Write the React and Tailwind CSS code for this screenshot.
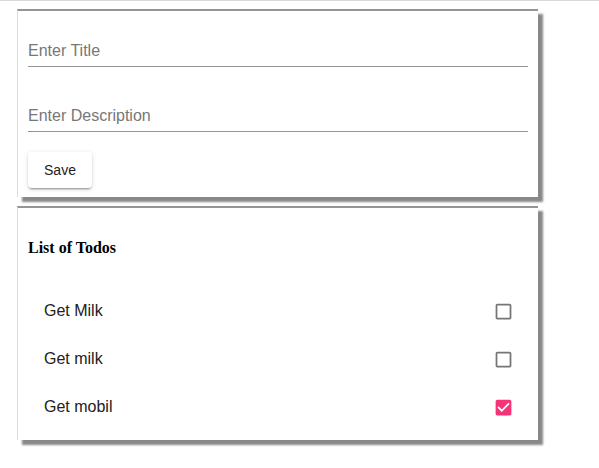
export default function App() {
  const todos = [
    { title: "Get Milk", done: false },
    { title: "Get milk", done: false },
    { title: "Get mobil", done: true },
  ];

  return (
    <div className="min-h-[468px] bg-white border-t border-[#d9d9d9] font-['Liberation_Sans',Arial,sans-serif]">
      <div className="ml-[17px] w-[521px] pt-[8px]">
        <div className="bg-white border-l border-[#dcdcdc] border-t-2 border-t-[#959595] shadow-[5px_5px_2px_#888] px-[10px] pt-[24px] pb-[9px]">
          <div className="h-[32px] border-b border-[#949494] flex items-center">
            <input
              placeholder="Enter Title"
              className="w-full outline-none text-[16px] text-[#212121] placeholder:text-[#777]"
            />
          </div>
          <div className="mt-[33px] h-[32px] border-b border-[#949494] flex items-center">
            <input
              placeholder="Enter Description"
              className="w-full outline-none text-[16px] text-[#212121] placeholder:text-[#777]"
            />
          </div>
          <button className="mt-[20px] h-[36px] w-[64px] rounded-[4px] bg-white text-[14px] text-[#222] shadow-[0_3px_1px_-2px_rgba(0,0,0,0.2),0_2px_2px_0_rgba(0,0,0,0.14),0_1px_5px_0_rgba(0,0,0,0.12)]">
            Save
          </button>
        </div>

        <div className="mt-[9px] bg-white border-l border-[#dcdcdc] border-t-2 border-t-[#959595] shadow-[5px_5px_2px_#888] px-[10px] pt-[31px] pb-[9px]">
          <h4 className="font-['Liberation_Serif',serif] font-bold text-[16px] leading-[18px] text-black">
            List of Todos
          </h4>
          <ul className="mt-[30px]">
            {todos.map((t, i) => (
              <li key={i} className="h-[48px] flex items-center justify-between pl-4 pr-[14px]">
                <span className="text-[16px] text-[#212121]">{t.title}</span>
                {t.done ? (
                  <svg viewBox="0 0 24 24" className="w-[21px] h-[21px]" fill="#f73378">
                    <path d="M19 3H5c-1.11 0-2 .9-2 2v14c0 1.1.89 2 2 2h14c1.11 0 2-.9 2-2V5c0-1.1-.89-2-2-2zm-9 14l-5-5 1.41-1.41L10 14.17l7.59-7.59L19 8l-9 9z" />
                  </svg>
                ) : (
                  <svg viewBox="0 0 24 24" className="w-[21px] h-[21px]" fill="#757575">
                    <path d="M19 5v14H5V5h14m0-2H5c-1.11 0-2 .9-2 2v14c0 1.1.89 2 2 2h14c1.1 0 2-.9 2-2V5c0-1.1-.9-2-2-2z" />
                  </svg>
                )}
              </li>
            ))}
          </ul>
        </div>
      </div>
    </div>
  );
}
